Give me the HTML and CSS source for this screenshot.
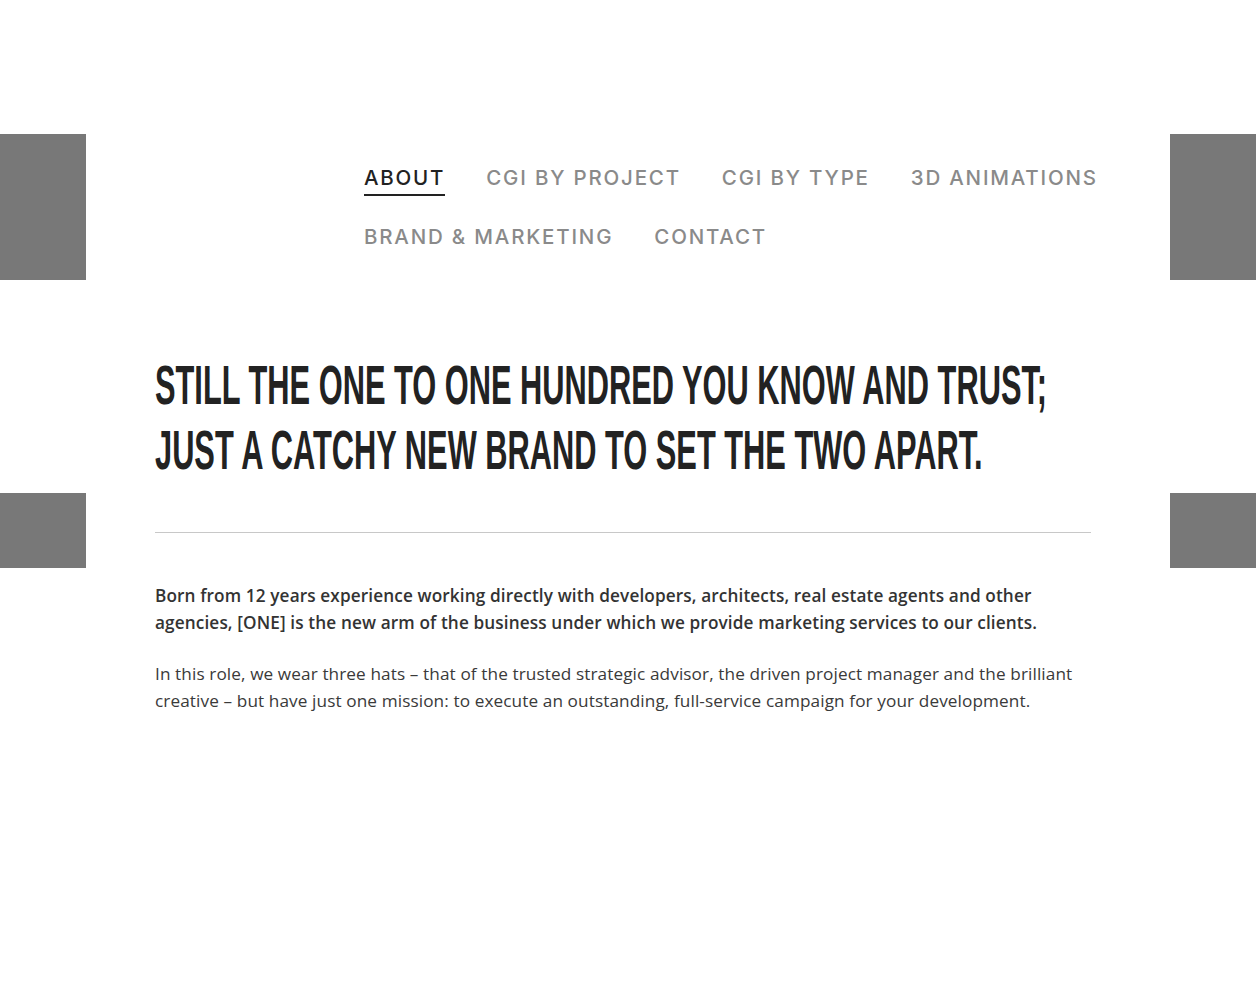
FILE: index.html
```html
<!DOCTYPE html>
<html lang="en">
<head>
<meta charset="utf-8">
<title>About</title>
<link rel="stylesheet" href="styles.css">
</head>
<body>
<div class="side side-left-top"></div>
<div class="side side-left-bottom"></div>
<div class="side side-right-top"></div>
<div class="side side-right-bottom"></div>
<header class="header">
  <nav class="nav">
    <a class="nav-item active" href="#">About</a>
    <a class="nav-item" href="#">CGI by Project</a>
    <a class="nav-item" href="#">CGI by Type</a>
    <a class="nav-item" href="#">3D Animations</a>
    <a class="nav-item" href="#">Brand &amp; Marketing</a>
    <a class="nav-item" href="#">Contact</a>
  </nav>
</header>
<main class="content">
  <h1 class="headline"><span class="headline-inner">Still the One to One Hundred you know and trust;<br>just a catchy new brand to set the two apart.</span></h1>
  <hr class="rule">
  <p class="lead">Born from 12 years experience working directly with developers, architects, real estate agents and other agencies, [ONE] is the new arm of the business under which we provide marketing services to our clients.</p>
  <p class="text">In this role, we wear three hats – that of the trusted strategic advisor, the driven project manager and the brilliant creative – but have just one mission: to execute an outstanding, full-service campaign for your development.</p>
</main>
</body>
</html>
```

FILE: styles.css
```css
html, body {
  margin: 0;
  padding: 0;
  background: #ffffff;
}
body {
  position: relative;
  min-height: 986px;
  overflow: hidden;
  font-family: "Open Sans", "Liberation Sans", sans-serif;
}
.side {
  position: absolute;
  width: 86px;
  background: #787878;
}
.side-left-top { left: 0; top: 134px; height: 146px; }
.side-left-bottom { left: 0; top: 493px; height: 75px; }
.side-right-top { right: 0; top: 134px; height: 146px; }
.side-right-bottom { right: 0; top: 493px; height: 75px; }

.header {
  padding: 163px 0 0 364px;
}
.nav {
  display: flex;
  flex-wrap: wrap;
  column-gap: 41px;
  row-gap: 26px;
  width: 760px;
}
.nav-item {
  font-family: "Inter", "Liberation Sans", sans-serif;
  font-size: 20.5px;
  font-weight: 500;
  letter-spacing: 1.8px;
  text-transform: uppercase;
  color: #8a8a8a;
  text-decoration: none;
  line-height: 29px;
  padding-bottom: 2px;
  border-bottom: 2px solid transparent;
}
.nav-item.active {
  color: #222222;
  border-bottom-color: #222222;
}

.content {
  width: 936px;
  margin: 0 0 0 155px;
  padding-top: 97px;
}
.headline {
  margin: 0;
  font-family: "Liberation Sans Narrow", "Liberation Sans", sans-serif;
  font-weight: 700;
  font-size: 56px;
  line-height: 65px;
  text-transform: uppercase;
  color: #222222;
  white-space: nowrap;
  overflow: hidden;
}
.headline-inner {
  display: inline-block;
  transform: scaleX(0.55);
  transform-origin: left top;
}
.rule {
  margin: 50px 0 0 0;
  border: 0;
  border-top: 1px solid #c8c8c8;
  height: 0;
}
.lead {
  margin: 49px 0 0 0;
  font-size: 17.2px;
  font-weight: 600;
  line-height: 27px;
  letter-spacing: 0.12px;
  color: #333333;
}
.text {
  margin: 24px 0 0 0;
  font-size: 17.2px;
  font-weight: 400;
  line-height: 27px;
  letter-spacing: 0.1px;
  color: #3a3a3a;
}
```
